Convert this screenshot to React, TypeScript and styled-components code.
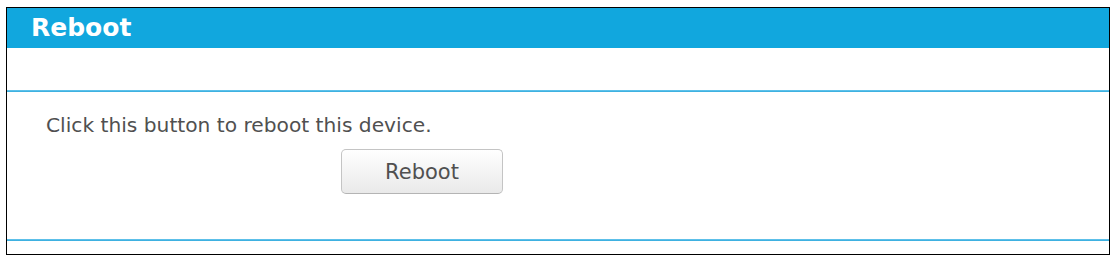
import React from "react";
import styled, { createGlobalStyle } from "styled-components";

const Global = createGlobalStyle`
  html, body { margin: 0; padding: 0; background: #ffffff; }
  body { font-family: "DejaVu Sans", Verdana, sans-serif; }
`;

const Panel = styled.div`
  box-sizing: border-box;
  margin: 7px 0 0 6px;
  width: 1104px;
  height: 248px;
  border: 1px solid #000000;
  background: #ffffff;
  display: flex;
  flex-direction: column;
`;

const Header = styled.div`
  height: 40px;
  background: #11a7de;
  color: #ffffff;
  font-family: "DejaVu Sans", Verdana, sans-serif;
  font-weight: bold;
  font-size: 25px;
  line-height: 40px;
  padding-left: 24px;
`;

const Spacer = styled.div<{ $h: number }>`
  height: ${(p) => p.$h}px;
`;

const Divider = styled.div`
  height: 2px;
  background: linear-gradient(#6cc8ee, #2fa9dc);
`;

const Content = styled.div`
  padding: 21px 0 45px 39px;
  display: flex;
  flex-direction: column;
  align-items: flex-start;
`;

const Message = styled.div`
  font-size: 20.2px;
  line-height: 24px;
  color: #505050;
`;

const Button = styled.button`
  box-sizing: border-box;
  margin: 12px 0 0 295px;
  width: 162px;
  height: 45px;
  border: 1px solid #c4c4c4;
  border-bottom-color: #b4b4b4;
  border-radius: 5px;
  background: linear-gradient(#ffffff, #e9e9e9);
  color: #505050;
  font-family: "DejaVu Sans", Verdana, sans-serif;
  font-size: 21px;
  padding: 0;
  display: flex;
  align-items: center;
  justify-content: center;
  cursor: pointer;
`;

export default function App() {
  return (
    <>
      <Global />
      <Panel>
        <Header>Reboot</Header>
        <Spacer $h={42} />
        <Divider />
        <Content>
          <Message>Click this button to reboot this device.</Message>
          <Button>Reboot</Button>
        </Content>
        <Divider />
        <Spacer $h={13} />
      </Panel>
    </>
  );
}
